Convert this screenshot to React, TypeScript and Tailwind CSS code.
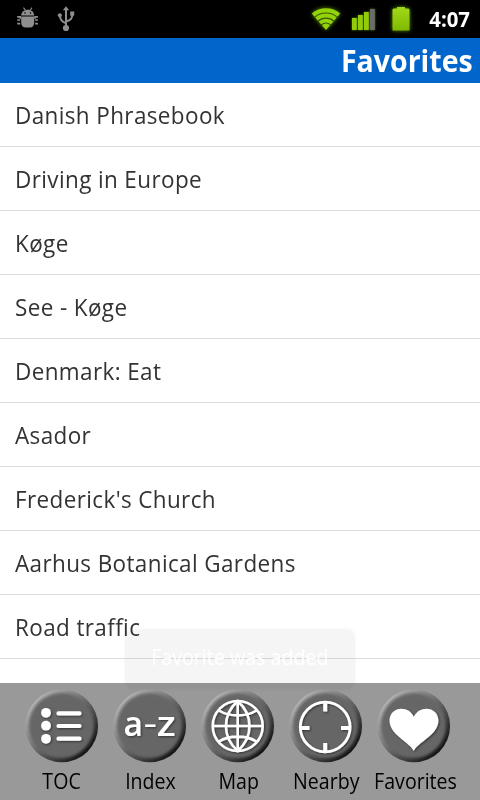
import React from 'react';

const favorites = [
    "Danish Phrasebook",
    "Driving in Europe",
    "Køge",
    "See - Køge",
    "Denmark: Eat",
    "Asador",
    "Frederick's Church",
    "Aarhus Botanical Gardens",
    "Road traffic",
];

const DebugIcon = () => (
    <svg width="22" height="22" viewBox="0 0 22 22" fill="#8f8f8f">
        <path d="M4.2 8.5C4.2 5 7 2.7 10.8 2.7s6.3 2.3 6.3 5.8z" />
        <path d="M6.5 0.6l2 2.9M15 0.6l-2 2.9" stroke="#8f8f8f" strokeWidth="1.1" />
        <circle cx="8" cy="6" r="0.8" fill="#000" />
        <circle cx="13.5" cy="6" r="0.8" fill="#000" />
        <path d="M4.2 9.5h13v6c0 3.2-1.8 5.1-4.3 5.1H8.5c-2.5 0-4.3-1.9-4.3-5.1z" />
        <path d="M0.2 9.8h3v2M0.2 13h3M0.2 16.6h3M20.9 9.8h-2.8v2M20.9 13h-2.8M20.9 16.6h-2.8" stroke="#8f8f8f" strokeWidth="1.7" fill="none" />
    </svg>
);

const UsbIcon = () => (
    <svg width="18" height="26" viewBox="0 0 18 26" fill="#8f8f8f">
        <path d="M9 0.2l3.2 4H5.8z" />
        <path d="M9 3v19M9 17.3C4.5 15.8 3 13.5 2.8 9M9 15.5c5-1.2 6.3-3 6.3-7.5" stroke="#8f8f8f" strokeWidth="2" fill="none" />
        <circle cx="2.8" cy="9.3" r="2" />
        <rect x="13.2" y="5.5" width="4" height="4.2" />
        <circle cx="9" cy="22" r="3.1" />
    </svg>
);

const WifiIcon = () => (
    <svg width="30" height="24" viewBox="0 0 30 24" className="overflow-visible drop-shadow-[0_0_2px_#5c8f00]">
        <path d="M15 23L0.8 6.5C8.5 -0.6 21.5 -0.6 29.2 6.5z" fill="#92d30c" />
        <path d="M3.6 10.2C10 4.6 20 4.6 26.4 10.2M7 14.2C11.5 10 18.5 10 23 14.2M10.2 18C13 15.5 17 15.5 19.8 18" stroke="#3b5a00" strokeWidth="1.2" fill="none" />
    </svg>
);

const SignalIcon = () => (
    <svg width="24" height="22" viewBox="0 0 24 22" className="overflow-visible drop-shadow-[0_0_1px_#5c8f00]">
        <rect x="0" y="9" width="4.8" height="12" fill="#92cb09" />
        <rect x="6" y="6" width="4.8" height="15" fill="#92cb09" />
        <rect x="12" y="3" width="4.8" height="18" fill="#92cb09" />
        <rect x="18" y="0" width="4.8" height="21" fill="#6b6b6b" />
    </svg>
);

const BatteryIcon = () => (
    <svg width="18" height="26" viewBox="0 0 18 26" className="overflow-visible drop-shadow-[0_0_2px_#5c8f00]">
        <defs>
            <linearGradient id="battery" x1="0" y1="0" x2="0" y2="1">
                <stop offset="0" stopColor="#a2d91a" />
                <stop offset="1" stopColor="#7fb900" />
            </linearGradient>
        </defs>
        <path d="M0.5 3.5l1-1h3.5V1h8v1.5h3.5l1 1v21h-17z" fill="url(#battery)" />
    </svg>
);

const RoundIcon = ({ children }: { children: React.ReactNode }) => (
    <svg width="76" height="76" viewBox="0 0 76 76" className="block shrink-0">
        <circle cx="37.7" cy="37.9" r="36.4" fill="url(#bevel)" filter="url(#soften)" />
        <circle cx="37.4" cy="37.6" r="32.5" fill="#666" filter="url(#blend)" />
        <g filter="url(#glyphShadow)">{children}</g>
    </svg>
);

const tabs = [
    {
        label: "TOC",
        labelClass: "-ml-px",
        glyph: (
            <>
                <g fill="#fff">
                    <circle cx="22" cy="24.8" r="4.9" />
                    <circle cx="22" cy="37.7" r="4.9" />
                    <circle cx="22" cy="50.8" r="4.9" />
                </g>
                <path d="M34.5 25.4h21M34.5 38h21M34.5 50.7h21" stroke="#fff" strokeWidth="4.2" strokeLinecap="round" />
            </>
        ),
    },
    {
        label: "Index",
        labelClass: "",
        glyph: (
            <g fill="#fff" fontSize="35" fontWeight="600">
                <text x="11.5" y="47.5" textLength="19.5" lengthAdjust="spacingAndGlyphs">a</text>
                <text x="31.6" y="47" textLength="13.6" lengthAdjust="spacingAndGlyphs" fontWeight="500">-</text>
                <text x="44.8" y="47.5" textLength="19" lengthAdjust="spacingAndGlyphs">z</text>
            </g>
        ),
    },
    {
        label: "Map",
        labelClass: "ml-px",
        glyph: (
            <g fill="none" stroke="#fff" strokeWidth="2.6">
                <circle cx="37.7" cy="38" r="25" />
                <path d="M37.7 13C22 27 22 49 37.7 63C53.4 49 53.4 27 37.7 13zM37.7 13v50M12.7 38h50M19 22.5c10 6.5 27.4 6.5 37.4 0M19 53.5c10-6.5 27.4-6.5 37.4 0" />
            </g>
        ),
    },
    {
        label: "Nearby",
        labelClass: "ml-px",
        glyph: (
            <g fill="none" stroke="#fff">
                <circle cx="37.2" cy="39" r="24.9" strokeWidth="2.8" />
                <path d="M37.2 14v9.5M37.2 55v9.5M12 40h9.5M53 40h9.5" strokeWidth="4" />
            </g>
        ),
    },
    {
        label: "Favorites",
        labelClass: "ml-1",
        glyph: (
            <path d="M37.8 63C34 54.5 14 47 13.5 33C13.2 25.5 19 20.7 25.3 20.7C31 20.7 35.5 23.5 37.8 29C40.3 23.5 45 20.7 50.5 20.7C57 20.7 62.6 25.5 62.4 33C62 47 41.5 54.5 37.8 63z" fill="#fff" />
        ),
    },
];

const IconDefs = () => (
    <svg width="0" height="0" className="absolute">
        <defs>
            <linearGradient id="bevel" x1="0.15" y1="0.15" x2="0.85" y2="0.85">
                <stop offset="0" stopColor="#b4b4b4" />
                <stop offset="0.5" stopColor="#686868" />
                <stop offset="1" stopColor="#141414" />
            </linearGradient>
            <filter id="soften">
                <feGaussianBlur stdDeviation="0.5" />
            </filter>
            <filter id="blend" x="-20%" y="-20%" width="140%" height="140%">
                <feGaussianBlur stdDeviation="1.5" />
            </filter>
            <filter id="glyphShadow" x="-20%" y="-20%" width="140%" height="140%">
                <feDropShadow dx="1" dy="1" stdDeviation="0.8" floodColor="#000" floodOpacity="0.5" />
            </filter>
        </defs>
    </svg>
);

export default function App() {
    return (
        <div className="relative flex h-[800px] w-[480px] flex-col overflow-hidden bg-white font-['Open_Sans','Noto_Sans',sans-serif]">
            <IconDefs />

            {/* STATUS BAR */}
            <div className="flex h-[38px] shrink-0 items-center bg-black pl-[17px] pr-[10px]">
                <div className="-mt-[2px]"><DebugIcon /></div>
                <div className="ml-[18px]"><UsbIcon /></div>
                <div className="ml-auto flex items-center">
                    <WifiIcon />
                    <div className="ml-[11px] mt-px"><SignalIcon /></div>
                    <div className="ml-4"><BatteryIcon /></div>
                    <span className="ml-[18px] w-[42px] origin-right scale-x-[0.97] whitespace-nowrap text-right text-[21px] font-bold leading-none text-white">4:07</span>
                </div>
            </div>

            {/* TITLE */}
            <header className="flex h-[45px] shrink-0 items-center justify-end bg-[#0066cc] pr-[7px]">
                <h1 className="origin-right scale-x-[0.95] text-[30px] font-bold leading-none text-white">Favorites</h1>
            </header>

            {/* FAVORITES LIST */}
            <ul className="flex-1">
                {favorites.map((title) => (
                    <li key={title} className="flex h-16 items-center border-b border-[#dedede] pl-[15px]">
                        <span className="origin-left scale-x-[0.937] whitespace-nowrap text-2xl tracking-[0.4px] text-[#333]">{title}</span>
                    </li>
                ))}
            </ul>

            {/* BOTTOM TABS */}
            <nav className="flex h-[117px] shrink-0 bg-[#999] pl-[18px] pt-[5px]">
                {tabs.map((tab) => (
                    <div key={tab.label} className="flex w-[88px] flex-col items-center">
                        <RoundIcon>{tab.glyph}</RoundIcon>
                        <span className={`mt-px scale-x-[0.89] whitespace-nowrap text-[22px] leading-[30px] text-black ${tab.labelClass}`}>{tab.label}</span>
                    </div>
                ))}
            </nav>

            {/* TOAST */}
            <div className="absolute left-[125px] top-[629px] flex h-[60px] w-[230px] items-center justify-center rounded-lg bg-black/[0.04] pb-[3px] shadow-[0_0_4px_rgba(0,0,0,0.03)]">
                <span className="scale-x-[0.935] whitespace-nowrap text-[21px] text-white">Favorite was added</span>
            </div>
        </div>
    );
}
